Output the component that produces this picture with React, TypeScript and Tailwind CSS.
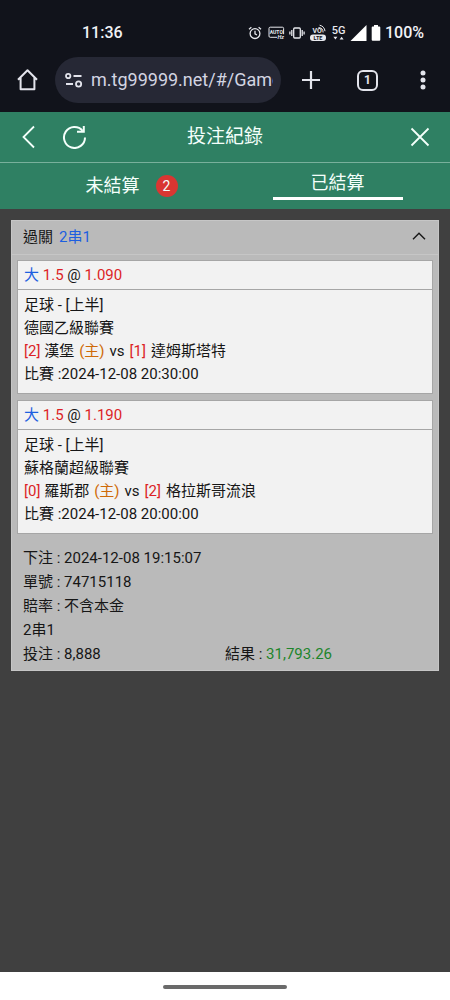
import type { ReactNode } from "react";

type Team = { score: number; name: string };

type Leg = {
  line: string;
  odds: string;
  league: string;
  home: Team;
  away: Team;
  kickoff: string;
};

const legs: Leg[] = [
  {
    line: "1.5",
    odds: "1.090",
    league: "德國乙級聯賽",
    home: { score: 2, name: "漢堡" },
    away: { score: 1, name: "達姆斯塔特" },
    kickoff: "2024-12-08 20:30:00",
  },
  {
    line: "1.5",
    odds: "1.190",
    league: "蘇格蘭超級聯賽",
    home: { score: 0, name: "羅斯郡" },
    away: { score: 2, name: "格拉斯哥流浪" },
    kickoff: "2024-12-08 20:00:00",
  },
];

function StatusIcons() {
  return (
    <div className="flex items-center text-[#e8e9ee]">
      <svg width="14" height="14" viewBox="0 0 14 14" fill="none" stroke="currentColor" strokeWidth="1.3">
        <circle cx="7" cy="7.6" r="4.9" />
        <path d="M7 4.8v3l2 1.2M1 3.2 3.4 1.2M13 3.2l-2.4-2" />
      </svg>
      <svg className="ml-1.5" width="17" height="14" viewBox="0 0 17 14" fill="none" stroke="currentColor">
        <path d="M9 11.3H2.2a1.2 1.2 0 0 1-1.2-1.2V2.4A1.2 1.2 0 0 1 2.2 1.2h12.2a1.2 1.2 0 0 1 1.2 1.2v5.8" />
        <text x="8.3" y="8" textAnchor="middle" fontSize="5" fontWeight="700" fill="currentColor" stroke="none">
          AUTO
        </text>
        <text x="9.6" y="13.4" fontSize="5.5" fontWeight="700" fontStyle="italic" fill="currentColor" stroke="none">
          Hz
        </text>
      </svg>
      <svg className="ml-1" width="16" height="14" viewBox="0 0 16 14" fill="none" stroke="currentColor" strokeWidth="1.3">
        <rect x="4.7" y="2" width="6.6" height="10" rx="1" />
        <path d="M2.8 4v6M13.2 4v6M.9 5.5v3M15.1 5.5v3" />
      </svg>
      <svg className="ml-1" width="18" height="18" viewBox="0 0 18 18" fill="none">
        <text x="3.6" y="9.4" fontSize="7" fontWeight="700" fill="currentColor">
          VO
        </text>
        <path d="M9.5 3.5a5 5 0 0 1 4.6 5M10.6 1.2a7 7 0 0 1 5.4 6" stroke="currentColor" />
        <rect x="1" y="10.6" width="16" height="6.4" rx="3" fill="currentColor" />
        <text x="9" y="15.8" textAnchor="middle" fontSize="5.5" fontWeight="700" fill="#11131b">
          LTE
        </text>
      </svg>
      <svg className="ml-1" width="15" height="18" viewBox="0 0 15 18" fill="currentColor">
        <text x="7.5" y="10" textAnchor="middle" fontSize="11" fontWeight="500">
          5G
        </text>
        <path d="M2.4 12.8h4l-2 2.8zM8.6 15.6h4l-2-2.8z" />
      </svg>
      <svg className="ml-1" width="17" height="16" viewBox="0 0 17 16" fill="#fff">
        <path d="M16.5 0v16H.5z" />
      </svg>
      <svg className="ml-1" width="10" height="16" viewBox="0 0 10 16" fill="#fff">
        <path d="M3 0h4v1.6h1.3a1 1 0 0 1 1 1V14.8a1 1 0 0 1-1 1H1.7a1 1 0 0 1-1-1V2.6a1 1 0 0 1 1-1H3z" />
      </svg>
      <span className="ml-1 text-base font-medium text-[#f1f2f6]">100%</span>
    </div>
  );
}

function BrowserBar() {
  return (
    <div className="flex h-16 items-center bg-[#11131b] pl-4 text-[#e3e4ec]">
      <button type="button" aria-label="Home">
        <svg width="24" height="24" viewBox="0 0 24 24" fill="none" stroke="currentColor" strokeWidth="2" strokeLinejoin="round">
          <path d="M2 11.8 11.5 2.3 21 11.8M4.6 9.8v11.4h13.8V9.8" />
        </svg>
      </button>
      <div className="ml-[15px] flex h-[46px] min-w-0 flex-1 items-center rounded-full bg-[#262835] pr-2 pl-2.5">
        <svg className="shrink-0" width="18" height="16" viewBox="0 0 18 16" fill="none" stroke="currentColor" strokeWidth="1.8">
          <circle cx="3.2" cy="4" r="2.2" />
          <path d="M8.5 4H16.5M1 12h7" />
          <circle cx="13.6" cy="12" r="2.6" />
        </svg>
        <input
          aria-label="Address"
          readOnly
          value="m.tg99999.net/#/Game"
          className="ml-2 w-full min-w-0 bg-transparent text-lg leading-7 text-[#d3d5e2] outline-none"
        />
      </div>
      <button type="button" aria-label="New tab" className="ml-5">
        <svg width="20" height="20" viewBox="0 0 20 20" stroke="currentColor" strokeWidth="2.2">
          <path d="M10 1v18M1 10h18" />
        </svg>
      </button>
      <button
        type="button"
        aria-label="Tabs"
        className="ml-9 flex h-[21px] w-[21px] items-center justify-center rounded-md border-2 border-[#e3e4ec] text-xs font-bold"
      >
        1
      </button>
      <button type="button" aria-label="Menu" className="mr-6 ml-[42px]">
        <svg width="6" height="20" viewBox="0 0 6 20" fill="currentColor">
          <circle cx="3" cy="3" r="2.5" />
          <circle cx="3" cy="10" r="2.5" />
          <circle cx="3" cy="17" r="2.5" />
        </svg>
      </button>
    </div>
  );
}

function PageHeader() {
  return (
    <div className="flex h-[51px] items-center border-b border-[#79b09c] px-5 text-[#f4fffb]">
      <div className="flex flex-1 items-center gap-6">
        <button type="button" aria-label="返回">
          <svg width="18" height="24" viewBox="0 0 18 24" fill="none" stroke="currentColor" strokeWidth="1.8">
            <path d="M14 1.5 3.5 12 14 22.5" />
          </svg>
        </button>
        <button type="button" aria-label="重新整理">
          <svg width="24" height="24" viewBox="0 0 24 24" fill="none" stroke="currentColor" strokeWidth="2">
            <path d="M23 12.5A10.5 10.5 0 1 1 20.6 5.8" />
            <path d="M21.8 1v5.8h-6.8" />
          </svg>
        </button>
      </div>
      <h1 className="text-[19px] leading-7">投注紀錄</h1>
      <div className="flex flex-1 justify-end">
        <button type="button" aria-label="關閉">
          <svg width="20" height="20" viewBox="0 0 20 20" stroke="currentColor" strokeWidth="1.8">
            <path d="M1.5 1.5l17 17M18.5 1.5l-17 17" />
          </svg>
        </button>
      </div>
    </div>
  );
}

function LegCard({ leg }: { leg: Leg }) {
  return (
    <li className="border border-[#a6a6a6] bg-[#f2f2f2]">
      <p className="border-b border-[#a6a6a6] px-1.5 leading-7">
        <span className="text-[#1d5fe0]">大</span> <Red>{leg.line}</Red> @ <Red>{leg.odds}</Red>
      </p>
      <div className="px-1.5 pt-1 pb-[7px] leading-[23px]">
        <p>足球 - [上半]</p>
        <p>{leg.league}</p>
        <p className="flex gap-[5px]">
          <span>
            <Red>[{leg.home.score}]</Red> {leg.home.name}
          </span>
          <span className="text-[#cf6a08]">(主)</span>
          <span>vs</span>
          <Red>[{leg.away.score}]</Red>
          <span>{leg.away.name}</span>
        </p>
        <p>比賽 :{leg.kickoff}</p>
      </div>
    </li>
  );
}

function Red({ children }: { children: ReactNode }) {
  return <span className="text-[#dc1f26]">{children}</span>;
}

export default function App() {
  return (
    <div className="flex min-h-screen flex-col bg-[#404040] font-['Roboto','Noto_Sans_CJK_TC',sans-serif] text-[15px] text-[#161616]">
      <div className="flex h-12 items-end justify-between bg-[#11131b] pr-[26px] pb-[3px] pl-[82px]">
        <span className="text-base font-medium text-[#f1f2f6]">11:36</span>
        <StatusIcons />
      </div>
      <BrowserBar />

      <header className="bg-[#2f8063]">
        <PageHeader />
        <nav className="grid h-[46px] grid-cols-2 text-lg text-[#f4fffb]">
          <button type="button" className="flex items-center justify-center">
            <span className="relative leading-7">
              未結算
              <span className="absolute top-[3px] left-full ml-4 flex h-[22px] w-[22px] items-center justify-center rounded-full bg-[#d93632] text-sm">
                2
              </span>
            </span>
          </button>
          <button type="button" className="flex items-start justify-center">
            <span className="border-b-[3px] border-white px-[38px] pt-1.5 leading-7">已結算</span>
          </button>
        </nav>
      </header>

      <main className="flex-1 px-[11px] pt-[11px]">
        <section className="border border-[#c6c6c6] bg-[#bababa]">
          <button
            type="button"
            aria-expanded="true"
            className="flex h-[34px] w-full items-center justify-between border-b border-[#c6c6c6] pr-3 pl-[11px]"
          >
            <span className="flex gap-1.5">
              過關 <span className="text-[#1d5fe0]">2串1</span>
            </span>
            <svg className="mb-1" width="14" height="8" viewBox="0 0 14 8" fill="none" stroke="currentColor" strokeWidth="1.4">
              <path d="M1 7.2 7 1.2l6 6" />
            </svg>
          </button>

          <ul className="flex flex-col gap-1.5 px-[5px] pt-[5px]">
            {legs.map((leg) => (
              <LegCard key={leg.kickoff} leg={leg} />
            ))}
          </ul>

          <div className="px-[11px] pt-3 pb-1 leading-6">
            <p>下注 : 2024-12-08 19:15:07</p>
            <p>單號 : 74715118</p>
            <p>賠率 : 不含本金</p>
            <p>2串1</p>
            <div className="grid grid-cols-2">
              <p>投注 : 8,888</p>
              <p>
                結果 : <span className="text-[#1d852b]">31,793.26</span>
              </p>
            </div>
          </div>
        </section>
      </main>

      <footer className="flex h-7 items-center justify-center bg-white pt-0.5">
        <div className="h-1 w-[124px] rounded-full bg-[#6a6a6a]" />
      </footer>
    </div>
  );
}
